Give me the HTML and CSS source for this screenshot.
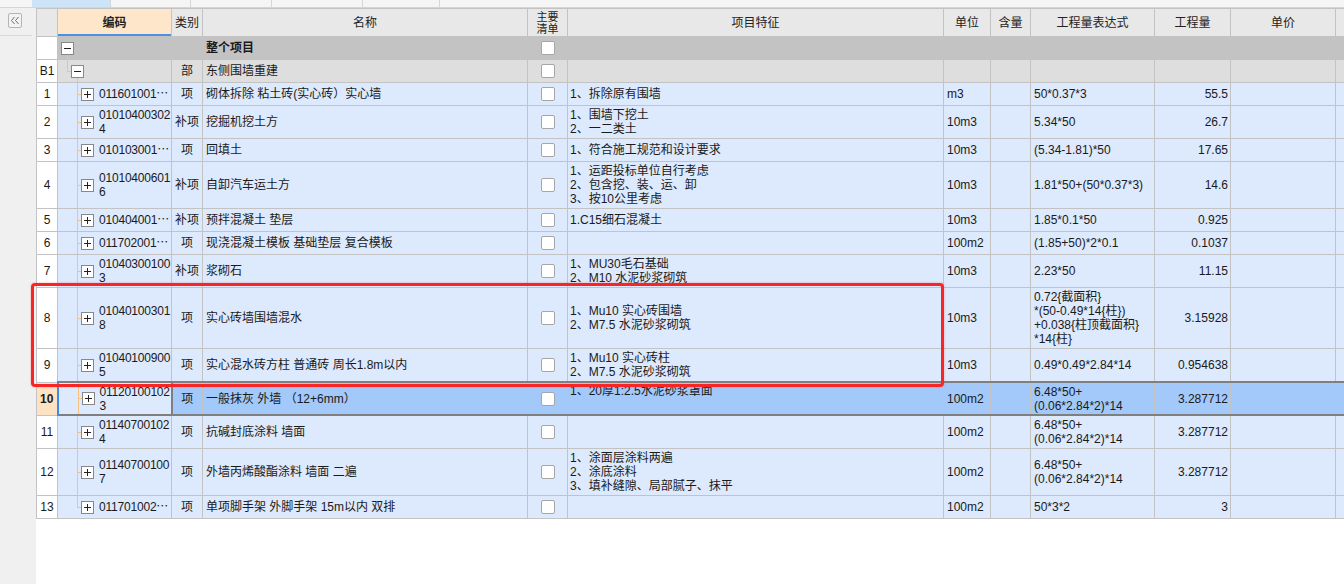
FILE: index.html
```html
<!DOCTYPE html>
<html lang="zh-CN">
<head>
  <meta charset="UTF-8">
  <title>分部分项</title>
  <link rel="stylesheet" href="styles.css">
</head>
<body>
  <div class="tabs">
    <div class="tab active"></div>
    <div class="tab w80"></div>
    <div class="tab w81"></div>
    <div class="tab w91"></div>
    <div class="tab w77"></div>
  </div>

  <div class="main">
    <div class="sidebar">
      <div class="side-head">
        <button class="collapse">
          <svg width="10" height="9" viewBox="0 0 10 9"><path d="M4.5 1L1.5 4.5l3 3.5M8.5 1l-3 3.5 3 3.5" fill="none" stroke="#6f6f6f" stroke-width="1"/></svg>
        </button>
      </div>
    </div>

    <div class="grid">
      <table>
        <colgroup>
          <col class="c-num"><col class="c-code"><col class="c-kind"><col class="c-name"><col class="c-chk">
          <col class="c-feat"><col class="c-unit"><col class="c-qty"><col class="c-expr"><col class="c-amt">
          <col class="c-price"><col class="c-extra">
        </colgroup>
        <thead>
          <tr>
            <th></th>
            <th class="hl">编码</th>
            <th>类别</th>
            <th>名称</th>
            <th class="two">主要<br>清单</th>
            <th>项目特征</th>
            <th>单位</th>
            <th>含量</th>
            <th>工程量表达式</th>
            <th>工程量</th>
            <th>单价</th>
            <th></th>
          </tr>
        </thead>
        <tbody>
          <!-- 整个项目 -->
          <tr class="root h1">
            <td class="num"></td>
            <td class="code lv0">
              <div class="tree"><svg class="box" width="13" height="13"><rect x="0.5" y="0.5" width="12" height="12" fill="#fff" stroke="#888"/><path d="M3 6.5h7" stroke="#222"/></svg></div>
            </td>
            <td class="kind"></td>
            <td class="name"><b>整个项目</b></td>
            <td class="chk"><span class="cb"></span></td>
            <td></td><td></td><td></td><td></td><td></td><td></td><td></td>
          </tr>
          <!-- 部 -->
          <tr class="part h1">
            <td class="num">B1</td>
            <td class="code lv1">
              <div class="tree"><svg class="box" width="13" height="13"><rect x="0.5" y="0.5" width="12" height="12" fill="#fff" stroke="#888"/><path d="M3 6.5h7" stroke="#222"/></svg></div>
            </td>
            <td class="kind">部</td>
            <td class="name">东侧围墙重建</td>
            <td class="chk"><span class="cb"></span></td>
            <td></td><td></td><td></td><td></td><td></td><td></td><td></td>
          </tr>

          <tr class="item h1">
            <td class="num">1</td>
            <td class="code">
              <div class="tree"><svg class="box" width="13" height="13"><rect x="0.5" y="0.5" width="12" height="12" fill="#fff" stroke="#888"/><path d="M3 6.5h7M6.5 3v7" stroke="#222"/></svg><span class="txt">011601001⋯</span></div>
            </td>
            <td class="kind">项</td>
            <td class="name">砌体拆除 粘土砖(实心砖）实心墙</td>
            <td class="chk"><span class="cb"></span></td>
            <td class="feat">1、拆除原有围墙</td>
            <td class="unit">m3</td><td></td>
            <td class="expr">50*0.37*3</td>
            <td class="amt">55.5</td><td></td><td></td>
          </tr>

          <tr class="item h2">
            <td class="num">2</td>
            <td class="code">
              <div class="tree"><svg class="box" width="13" height="13"><rect x="0.5" y="0.5" width="12" height="12" fill="#fff" stroke="#888"/><path d="M3 6.5h7M6.5 3v7" stroke="#222"/></svg><span class="txt">01010400302<br>4</span></div>
            </td>
            <td class="kind">补项</td>
            <td class="name">挖掘机挖土方</td>
            <td class="chk"><span class="cb"></span></td>
            <td class="feat">1、围墙下挖土<br>2、一二类土</td>
            <td class="unit">10m3</td><td></td>
            <td class="expr">5.34*50</td>
            <td class="amt">26.7</td><td></td><td></td>
          </tr>

          <tr class="item h1">
            <td class="num">3</td>
            <td class="code">
              <div class="tree"><svg class="box" width="13" height="13"><rect x="0.5" y="0.5" width="12" height="12" fill="#fff" stroke="#888"/><path d="M3 6.5h7M6.5 3v7" stroke="#222"/></svg><span class="txt">010103001⋯</span></div>
            </td>
            <td class="kind">项</td>
            <td class="name">回填土</td>
            <td class="chk"><span class="cb"></span></td>
            <td class="feat">1、符合施工规范和设计要求</td>
            <td class="unit">10m3</td><td></td>
            <td class="expr">(5.34-1.81)*50</td>
            <td class="amt">17.65</td><td></td><td></td>
          </tr>

          <tr class="item h3">
            <td class="num">4</td>
            <td class="code">
              <div class="tree"><svg class="box" width="13" height="13"><rect x="0.5" y="0.5" width="12" height="12" fill="#fff" stroke="#888"/><path d="M3 6.5h7M6.5 3v7" stroke="#222"/></svg><span class="txt">01010400601<br>6</span></div>
            </td>
            <td class="kind">补项</td>
            <td class="name">自卸汽车运土方</td>
            <td class="chk"><span class="cb"></span></td>
            <td class="feat">1、运距投标单位自行考虑<br>2、包含挖、装、运、卸<br>3、按10公里考虑</td>
            <td class="unit">10m3</td><td></td>
            <td class="expr">1.81*50+(50*0.37*3)</td>
            <td class="amt">14.6</td><td></td><td></td>
          </tr>

          <tr class="item h1">
            <td class="num">5</td>
            <td class="code">
              <div class="tree"><svg class="box" width="13" height="13"><rect x="0.5" y="0.5" width="12" height="12" fill="#fff" stroke="#888"/><path d="M3 6.5h7M6.5 3v7" stroke="#222"/></svg><span class="txt">010404001⋯</span></div>
            </td>
            <td class="kind">补项</td>
            <td class="name">预拌混凝土 垫层</td>
            <td class="chk"><span class="cb"></span></td>
            <td class="feat">1.C15细石混凝土</td>
            <td class="unit">10m3</td><td></td>
            <td class="expr">1.85*0.1*50</td>
            <td class="amt">0.925</td><td></td><td></td>
          </tr>

          <tr class="item h1">
            <td class="num">6</td>
            <td class="code">
              <div class="tree"><svg class="box" width="13" height="13"><rect x="0.5" y="0.5" width="12" height="12" fill="#fff" stroke="#888"/><path d="M3 6.5h7M6.5 3v7" stroke="#222"/></svg><span class="txt">011702001⋯</span></div>
            </td>
            <td class="kind">项</td>
            <td class="name">现浇混凝土模板 基础垫层 复合模板</td>
            <td class="chk"><span class="cb"></span></td>
            <td class="feat"></td>
            <td class="unit">100m2</td><td></td>
            <td class="expr">(1.85+50)*2*0.1</td>
            <td class="amt">0.1037</td><td></td><td></td>
          </tr>

          <tr class="item h2">
            <td class="num">7</td>
            <td class="code">
              <div class="tree"><svg class="box" width="13" height="13"><rect x="0.5" y="0.5" width="12" height="12" fill="#fff" stroke="#888"/><path d="M3 6.5h7M6.5 3v7" stroke="#222"/></svg><span class="txt">01040300100<br>3</span></div>
            </td>
            <td class="kind">补项</td>
            <td class="name">浆砌石</td>
            <td class="chk"><span class="cb"></span></td>
            <td class="feat">1、MU30毛石基础<br>2、M10 水泥砂浆砌筑</td>
            <td class="unit">10m3</td><td></td>
            <td class="expr">2.23*50</td>
            <td class="amt">11.15</td><td></td><td></td>
          </tr>

          <tr class="item h4">
            <td class="num">8</td>
            <td class="code">
              <div class="tree"><svg class="box" width="13" height="13"><rect x="0.5" y="0.5" width="12" height="12" fill="#fff" stroke="#888"/><path d="M3 6.5h7M6.5 3v7" stroke="#222"/></svg><span class="txt">01040100301<br>8</span></div>
            </td>
            <td class="kind">项</td>
            <td class="name">实心砖墙围墙混水</td>
            <td class="chk"><span class="cb"></span></td>
            <td class="feat">1、Mu10 实心砖围墙<br>2、M7.5 水泥砂浆砌筑</td>
            <td class="unit">10m3</td><td></td>
            <td class="expr">0.72{截面积}<br>*(50-0.49*14{柱})<br>+0.038{柱顶截面积}<br>*14{柱}</td>
            <td class="amt">3.15928</td><td></td><td></td>
          </tr>

          <tr class="item h2">
            <td class="num">9</td>
            <td class="code">
              <div class="tree"><svg class="box" width="13" height="13"><rect x="0.5" y="0.5" width="12" height="12" fill="#fff" stroke="#888"/><path d="M3 6.5h7M6.5 3v7" stroke="#222"/></svg><span class="txt">01040100900<br>5</span></div>
            </td>
            <td class="kind">项</td>
            <td class="name">实心混水砖方柱 普通砖 周长1.8m以内</td>
            <td class="chk"><span class="cb"></span></td>
            <td class="feat">1、Mu10 实心砖柱<br>2、M7.5 水泥砂浆砌筑</td>
            <td class="unit">10m3</td><td></td>
            <td class="expr">0.49*0.49*2.84*14</td>
            <td class="amt">0.954638</td><td></td><td></td>
          </tr>

          <tr class="item sel h2">
            <td class="num cur">10</td>
            <td class="code focus">
              <div class="tree"><svg class="box" width="13" height="13"><rect x="0.5" y="0.5" width="12" height="12" fill="#fff" stroke="#888"/><path d="M3 6.5h7M6.5 3v7" stroke="#222"/></svg><span class="txt">01120100102<br>3</span></div>
            </td>
            <td class="kind">项</td>
            <td class="name">一般抹灰 外墙 （12+6mm）</td>
            <td class="chk"><span class="cb"></span></td>
            <td class="feat top">1、20厚1:2.5水泥砂浆罩面</td>
            <td class="unit">100m2</td><td></td>
            <td class="expr">6.48*50+<br>(0.06*2.84*2)*14</td>
            <td class="amt">3.287712</td><td></td><td></td>
          </tr>

          <tr class="item h2">
            <td class="num">11</td>
            <td class="code">
              <div class="tree"><svg class="box" width="13" height="13"><rect x="0.5" y="0.5" width="12" height="12" fill="#fff" stroke="#888"/><path d="M3 6.5h7M6.5 3v7" stroke="#222"/></svg><span class="txt">01140700102<br>4</span></div>
            </td>
            <td class="kind">项</td>
            <td class="name">抗碱封底涂料 墙面</td>
            <td class="chk"><span class="cb"></span></td>
            <td class="feat"></td>
            <td class="unit">100m2</td><td></td>
            <td class="expr">6.48*50+<br>(0.06*2.84*2)*14</td>
            <td class="amt">3.287712</td><td></td><td></td>
          </tr>

          <tr class="item h3">
            <td class="num">12</td>
            <td class="code">
              <div class="tree"><svg class="box" width="13" height="13"><rect x="0.5" y="0.5" width="12" height="12" fill="#fff" stroke="#888"/><path d="M3 6.5h7M6.5 3v7" stroke="#222"/></svg><span class="txt">01140700100<br>7</span></div>
            </td>
            <td class="kind">项</td>
            <td class="name">外墙丙烯酸酯涂料 墙面 二遍</td>
            <td class="chk"><span class="cb"></span></td>
            <td class="feat">1、涂面层涂料两遍<br>2、涂底涂料<br>3、填补缝隙、局部腻子、抹平</td>
            <td class="unit">100m2</td><td></td>
            <td class="expr">6.48*50+<br>(0.06*2.84*2)*14</td>
            <td class="amt">3.287712</td><td></td><td></td>
          </tr>

          <tr class="item h1">
            <td class="num">13</td>
            <td class="code last">
              <div class="tree"><svg class="box" width="13" height="13"><rect x="0.5" y="0.5" width="12" height="12" fill="#fff" stroke="#888"/><path d="M3 6.5h7M6.5 3v7" stroke="#222"/></svg><span class="txt">011701002⋯</span></div>
            </td>
            <td class="kind">项</td>
            <td class="name">单项脚手架 外脚手架 15m以内 双排</td>
            <td class="chk"><span class="cb"></span></td>
            <td class="feat"></td>
            <td class="unit">100m2</td><td></td>
            <td class="expr">50*3*2</td>
            <td class="amt">3</td><td></td><td></td>
          </tr>
        </tbody>
      </table>
    </div>
  </div>

  <!-- 红色标注框 -->
  <div class="mark"></div>
</body>
</html>
```

FILE: styles.css
```css
html, body {
  height: 100%;
}
body {
  margin: 0;
  overflow: hidden;
  font-family: "Liberation Sans", "Noto Sans CJK SC", sans-serif;
  font-size: 12px;
  color: #1a1a1a;
  background: #fff;
  position: relative;
}
.tabs {
  display: flex;
  height: 7px;
  padding-left: 32px;
  background: #f5f5f5;
  border-bottom: 1px solid #d4d4d4;
}
.tab {
  width: 78px;
  border-right: 1px solid #d6d6d6;
}
.tab.active {
  background: #cde3f7;
}
.tab.w80 { width: 79px; }
.tab.w81 { width: 80px; }
.tab.w91 { width: 90px; }
.tab.w77 { width: 76px; }

.main {
  display: flex;
  height: calc(100% - 8px);
}
.sidebar {
  width: 36px;
  flex-shrink: 0;
  background: #f0f0f0;
}
.side-head {
  height: 28px;
  margin-right: 4px;
  border-bottom: 1px solid #d8d8d8;
  padding: 5px 0 0 8px;
  box-sizing: border-box;
}
.collapse {
  width: 14px;
  height: 15px;
  padding: 0;
  border: 1px solid #b4b4b4;
  border-radius: 2px;
  background: #f3f3f3;
  display: flex;
  align-items: center;
  justify-content: center;
}
.grid {
  flex: 1;
  overflow: hidden;
}
table {
  border-collapse: collapse;
  table-layout: fixed;
  width: 1359px;
}
.c-num { width: 21px; }
.c-code { width: 114px; }
.c-kind { width: 31px; }
.c-name { width: 325px; }
.c-chk { width: 40px; }
.c-feat { width: 376px; }
.c-unit { width: 47px; }
.c-qty { width: 40px; }
.c-expr { width: 124px; }
.c-amt { width: 76px; }
.c-price { width: 105px; }
.c-extra { width: 60px; }

th, td {
  border: 1px solid #c3c3c3;
  padding: 0 3px;
  line-height: 14px;
  white-space: nowrap;
  overflow: hidden;
}
th {
  height: 27px;
  background: #e8e8e8;
  font-weight: normal;
  text-align: center;
  color: #222;
}
th.hl {
  background: #fde6c9;
  font-weight: bold;
  box-shadow: inset 0 -2px 0 #4a91e4;
}
th.two {
  font-size: 11px;
  line-height: 12px;
  padding: 0;
}

tr.h1 td { height: 22px; }
tr.h2 td { height: 32px; }
tr.h3 td { height: 46px; }
tr.h4 td { height: 60px; }
tr.sel td { height: 30px; }

tr.root td { background-color: #c3c3c3; }
tr.part td { background-color: #dedede; }
tr.item td { background-color: #dde9fc; }
td.num {
  background-color: #fff !important;
  text-align: center;
  padding: 0;
}
tr.sel td {
  background-color: #a2c9fa;
  border-top: 2px solid #7f7f7f;
  border-bottom: 2px solid #7f7f7f;
}
tr.sel td.num {
  background-color: #fde3c4 !important;
  font-weight: bold;
  border-right: 2px solid #3d8ce8;
  border-top: 1px solid #c3c3c3;
  border-bottom: 1px solid #c3c3c3;
}
tr.sel td.focus {
  background-color: #dde9fc;
  border: 2px solid #7f7f7f;
  border-left: 2px solid #3d8ce8;
}

/* 树形连线 */
td.code {
  padding: 0 0 0 23px;
  background-image:
    linear-gradient(#f8c27e, #f8c27e),
    linear-gradient(#f8c27e, #f8c27e);
  background-repeat: no-repeat;
  background-position: 19px 0, 19px 50%;
  background-size: 1px 100%, 4px 1px;
}
td.code.last {
  background-size: 1px 50%, 4px 1px;
}
td.code.lv0 {
  padding-left: 3px;
  background-image: linear-gradient(to bottom, transparent calc(50% + 6px), #f8c27e calc(50% + 6px));
  background-position: 9px 0;
  background-size: 1px 100%;
}
td.code.lv1 {
  padding-left: 13px;
  background-image:
    linear-gradient(#f8c27e, #f8c27e),
    linear-gradient(#f8c27e, #f8c27e),
    linear-gradient(to bottom, transparent calc(50% + 6px), #f8c27e calc(50% + 6px));
  background-position: 9px 0, 9px 50%, 19px 0;
  background-size: 1px 50%, 4px 1px, 1px 100%;
}
.tree {
  display: flex;
  align-items: center;
}
.box {
  flex-shrink: 0;
  display: block;
}
.txt {
  margin-left: 5px;
  letter-spacing: -0.2px;
}

td.kind { text-align: center; padding: 0; }
td.name { padding-left: 3px; }
td.chk { text-align: center; padding: 0; }
.cb {
  display: inline-block;
  width: 12px;
  height: 12px;
  border: 1px solid #a6a6a6;
  border-radius: 2px;
  background: #fff;
  vertical-align: middle;
}
td.feat { padding-left: 2px; }
td.feat.top { vertical-align: top; padding-top: 1px; }
td.amt { text-align: right; padding-right: 2px; }

.mark {
  position: absolute;
  left: 31px;
  top: 283px;
  width: 913px;
  height: 104px;
  box-sizing: border-box;
  border: 3px solid #f72626;
  border-radius: 4px;
  box-shadow: 0 0 2px rgba(255, 60, 60, 0.5);
}
```
